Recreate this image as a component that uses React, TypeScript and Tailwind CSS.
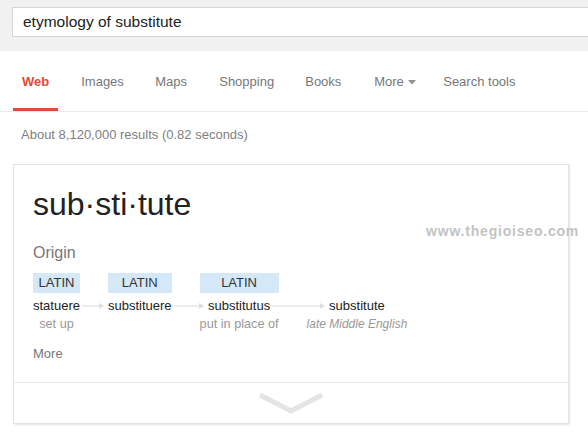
const tabs = [
  { label: 'Images', w: 'w-[74px]' },
  { label: 'Maps', w: 'w-[64px]' },
  { label: 'Shopping', w: 'w-[86px]' },
  { label: 'Books', w: 'w-[69px]' },
]

type Step = {
  lang?: string
  word: string
  meaning?: string
  italic?: boolean
  arrow?: number
}

const steps: Step[] = [
  { lang: 'LATIN', word: 'statuere', meaning: 'set up' },
  { lang: 'LATIN', word: 'substituere', arrow: 22 },
  { lang: 'LATIN', word: 'substitutus', meaning: 'put in place of', arrow: 32 },
  { word: 'substitute', meaning: 'late Middle English', italic: true, arrow: 55 },
]

function Arrow({ w }: { w: number }) {
  return (
    <svg
      width={w}
      height={7}
      viewBox={`0 0 ${w} 7`}
      className="absolute right-full top-1/2 mr-[4px] -translate-y-1/2"
    >
      <line x1={0} y1={3.5} x2={w - 4} y2={3.5} stroke="#dadada" strokeWidth={1} />
      <path d={`M${w - 5} 0.5 L${w} 3.5 L${w - 5} 6.5 Z`} fill="#dedede" />
    </svg>
  )
}

export default function App() {
  return (
    <div className="relative h-[442px] w-[588px] overflow-hidden bg-white font-['Liberation_Sans',Arial,sans-serif]">
      {/* search bar */}
      <div className="h-[51px] bg-[#f1f1f1] pl-[12px] pt-[7px]">
        <div className="h-[30px] w-[600px] border border-[#d5d5d5] bg-white pl-[10px] text-[15.5px] leading-[28px] text-[#222]">
          etymology of substitute
        </div>
      </div>

      {/* tabs */}
      <div className="flex h-[61px] items-stretch border-b border-[#ebebeb] pl-[13px] text-[13px] text-[#777]">
        <div className="flex items-center border-b-[3px] border-[#dd4b39] px-[9px] pt-[4px] font-bold text-[#dd4b39]">
          Web
        </div>
        <div className="ml-[23px] flex items-center pt-[2px]">
          {tabs.map((t) => (
            <span key={t.label} className={t.w}>
              {t.label}
            </span>
          ))}
          <span className="flex w-[69px] items-center gap-[4px]">
            More
            <svg width={8} height={5} viewBox="0 0 8 5">
              <path d="M0 0 L8 0 L4 4.5 Z" fill="#909090" />
            </svg>
          </span>
          <span>Search tools</span>
        </div>
      </div>

      <div className="mt-[14px] pl-[21px] text-[13px] leading-[18px] text-[#808080]">
        About 8,120,000 results (0.82 seconds)
      </div>

      {/* dictionary card */}
      <div className="ml-[13px] mt-[20px] w-[556px] border border-[#e3e3e3] shadow-[1px_1px_2px_rgba(0,0,0,0.1)]">
        <div className="px-[19px] pb-[19px] pt-[19px]">
          <div className="text-[32px] leading-[40px] text-[#222]">sub·sti·tute</div>
          <div className="mt-[19px] text-[16px] leading-[20px] text-[#777]">Origin</div>

          <div className="mt-[10px] flex gap-[28px] text-[13px]">
            {steps.map((s) => (
              <div key={s.word} className="flex flex-col items-center">
                {s.lang ? (
                  <div className="h-[20px] self-stretch bg-[#d5e8f8] px-[5px] text-center leading-[20px] text-[#333]">
                    {s.lang}
                  </div>
                ) : (
                  <div className="h-[20px]" />
                )}
                <div className="relative mt-[4px] leading-[18px] text-[#222]">
                  {s.arrow && <Arrow w={s.arrow} />}
                  {s.word}
                </div>
                {s.meaning && (
                  <div
                    className={`leading-[18px] text-[#999] ${s.italic ? 'text-[12px] italic' : 'text-[12.7px]'}`}
                  >
                    {s.meaning}
                  </div>
                )}
              </div>
            ))}
          </div>

          <div className="mt-[12px] text-[13px] leading-[18px] text-[#777]">More</div>
        </div>

        <div className="flex h-[41px] items-center justify-center border-t border-[#ebebeb]">
          <svg width={68} height={24} viewBox="0 0 68 24" className="mt-[1px]">
            <polyline points="3,3 34,19 65,3" fill="none" stroke="#e4e4e4" strokeWidth={5} />
          </svg>
        </div>
      </div>

      <div className="absolute left-[426px] top-[221px] text-[14px] font-bold tracking-[0.8px] text-[#c3c3c3]">
        www.thegioiseo.com
      </div>
    </div>
  )
}
